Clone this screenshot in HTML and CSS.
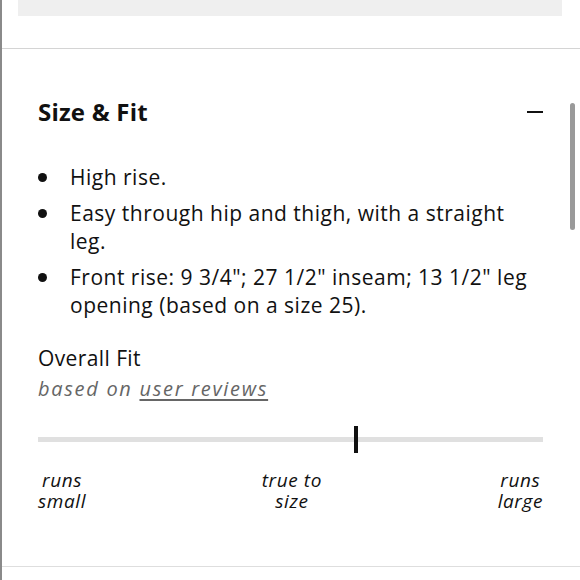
FILE: index.html
```html
<!DOCTYPE html>
<html lang="en">
<head>
<meta charset="utf-8">
<title>Size &amp; Fit</title>
<link rel="stylesheet" href="styles.css">
</head>
<body>
<div class="page">
  <div class="top-card"></div>
  <section class="section">
    <header class="section-head">
      <h2 class="title">Size &amp; Fit</h2>
      <span class="collapse" aria-label="Collapse"></span>
    </header>
    <ul class="details">
      <li class="detail"><span class="dot"></span><span class="detail-text">High rise.</span></li>
      <li class="detail"><span class="dot"></span><span class="detail-text">Easy through hip and thigh, with a straight leg.</span></li>
      <li class="detail"><span class="dot"></span><span class="detail-text">Front rise: 9 3/4"; 27 1/2" inseam; 13 1/2" leg opening (based on a size 25).</span></li>
    </ul>
    <div class="fit-title">Overall Fit</div>
    <div class="fit-sub">based on <a class="fit-link" href="#">user reviews</a></div>
    <div class="slider">
      <div class="track"></div>
      <div class="marker" style="left: 62.6%"></div>
    </div>
    <div class="labels">
      <span class="label">runs<br>small</span>
      <span class="label">true to<br>size</span>
      <span class="label">runs<br>large</span>
    </div>
  </section>
  <div class="scrollbar"></div>
</div>
</body>
</html>
```
FILE: styles.css
```css
* { box-sizing: border-box; }
html, body { margin: 0; padding: 0; background: #fff; }
body {
  font-family: "Open Sans", "Noto Sans", sans-serif;
  color: #111;
  width: 580px;
  height: 580px;
  overflow: hidden;
}
.page {
  position: relative;
  height: 580px;
  border-left: 2px solid #8a8a8a;
}
.top-card {
  margin: 0 18px 0 16px;
  height: 16px;
  background: #efefef;
}
.section {
  margin-top: 32px;
  border-top: 1px solid #d4d4d4;
  border-bottom: 1px solid #dedede;
  padding: 48px 37px 54px 36px;
}
.section-head {
  display: flex;
  align-items: center;
  justify-content: space-between;
}
.title {
  margin: 0;
  font-size: 24px;
  line-height: 30px;
  font-weight: 700;
  letter-spacing: 0.2px;
}
.collapse {
  width: 16px;
  height: 2px;
  background: #111;
}
.details {
  list-style: none;
  margin: 36px 0 0 0;
  padding: 0;
  display: flex;
  flex-direction: column;
  gap: 8px;
}
.detail {
  display: flex;
  align-items: flex-start;
  font-size: 21px;
  line-height: 28px;
  letter-spacing: 0.5px;
}
.dot {
  flex: none;
  width: 9px;
  height: 9px;
  border-radius: 50%;
  background: #111;
  margin: 10px 23px 0 0;
}
.fit-title {
  margin-top: 25px;
  font-size: 21px;
  line-height: 28px;
  letter-spacing: 0.4px;
}
.fit-sub {
  margin-top: 4px;
  font-size: 20px;
  line-height: 26px;
  font-style: italic;
  color: #666;
  letter-spacing: 1.7px;
}
.fit-link {
  color: #666;
  text-decoration: underline;
  text-underline-offset: 3px;
}
.slider {
  position: relative;
  margin-top: 24px;
  height: 27px;
  display: flex;
  align-items: center;
}
.track {
  width: 100%;
  height: 5px;
  background: #e0e0e0;
}
.marker {
  position: absolute;
  top: 0;
  width: 4px;
  height: 27px;
  background: #111;
}
.labels {
  margin-top: 17px;
  display: flex;
  justify-content: space-between;
  font-size: 19px;
  line-height: 21px;
  font-style: italic;
  letter-spacing: 0.6px;
}
.label { text-align: center; }
.scrollbar {
  position: absolute;
  left: 568px;
  top: 103px;
  width: 5px;
  height: 127px;
  border-radius: 3px;
  background: #9a9a9a;
}
```
